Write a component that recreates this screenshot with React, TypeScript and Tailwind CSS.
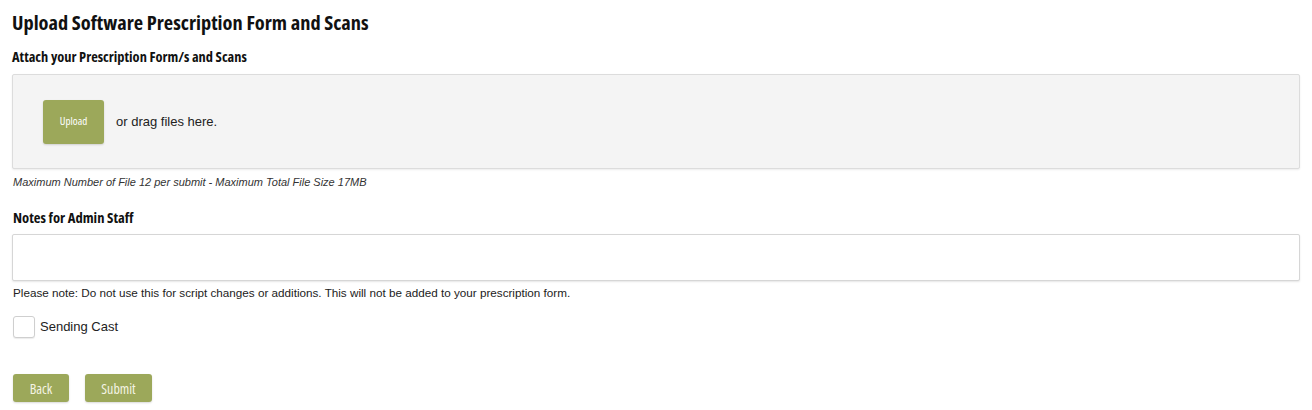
export default function App() {
  const condensed = "font-['Open_Sans',sans-serif] font-stretch-[75%]";
  return (
    <div className="min-h-[410px] bg-white px-[12px] pt-[9px] font-['Liberation_Sans',Arial,sans-serif] text-[#222]">
      <h1 className={`${condensed} text-[20.4px] font-bold leading-[26px] text-[#111]`}>
        Upload Software Prescription Form and Scans
      </h1>
      <h2 className={`${condensed} mt-[13px] text-[14.4px] font-bold leading-[18px] text-[#111]`}>
        Attach your Prescription Form/s and Scans
      </h2>
      <div className="mt-[8px] flex h-[95px] items-center rounded-[2px] border border-[#dcdcdc] bg-[#f4f4f4] pl-[30px] shadow-[0_1px_2px_rgba(0,0,0,0.08)]">
        <button className={`${condensed} h-[44px] w-[61px] rounded-[3px] bg-[#9ca85a] text-[11px] text-white shadow-[0_1px_2px_rgba(0,0,0,0.15)]`}>
          Upload
        </button>
        <span className="ml-[12px] text-[13px] text-[#222]">or drag files here.</span>
      </div>
      <p className="mt-[6px] pl-[1px] text-[11px] italic leading-[14px] text-[#333]">
        Maximum Number of File 12 per submit - Maximum Total File Size 17MB
      </p>
      <h2 className={`${condensed} mt-[19px] pl-[1px] text-[14.6px] font-bold leading-[18px] text-[#111]`}>
        Notes for Admin Staff
      </h2>
      <textarea className="mt-[8px] block h-[47px] w-full resize-none rounded-[2px] border border-[#d6d6d6] bg-white shadow-[0_1px_2px_rgba(0,0,0,0.1)] outline-none" />
      <p className="mt-[5px] pl-[1px] text-[11.7px] leading-[14px] text-[#222]">
        Please note: Do not use this for script changes or additions. This will not be added to your prescription form.
      </p>
      <label className="mt-[16px] flex items-center pl-[1px]">
        <span className="h-[22px] w-[22px] rounded-[3px] border border-[#cfcfcf] bg-white shadow-[0_1px_1px_rgba(0,0,0,0.08)]" />
        <span className="ml-[5px] text-[13px] text-[#222]">Sending Cast</span>
      </label>
      <div className="mt-[36px] flex gap-[16px] pl-[1px]">
        <button className={`${condensed} h-[28px] w-[56px] rounded-[3px] bg-[#9ca85a] text-[14px] text-[#f4f4e4] shadow-[0_1px_2px_rgba(0,0,0,0.15)]`}>
          Back
        </button>
        <button className={`${condensed} h-[28px] w-[67px] rounded-[3px] bg-[#9ca85a] text-[14px] text-[#f4f4e4] shadow-[0_1px_2px_rgba(0,0,0,0.15)]`}>
          Submit
        </button>
      </div>
    </div>
  );
}
